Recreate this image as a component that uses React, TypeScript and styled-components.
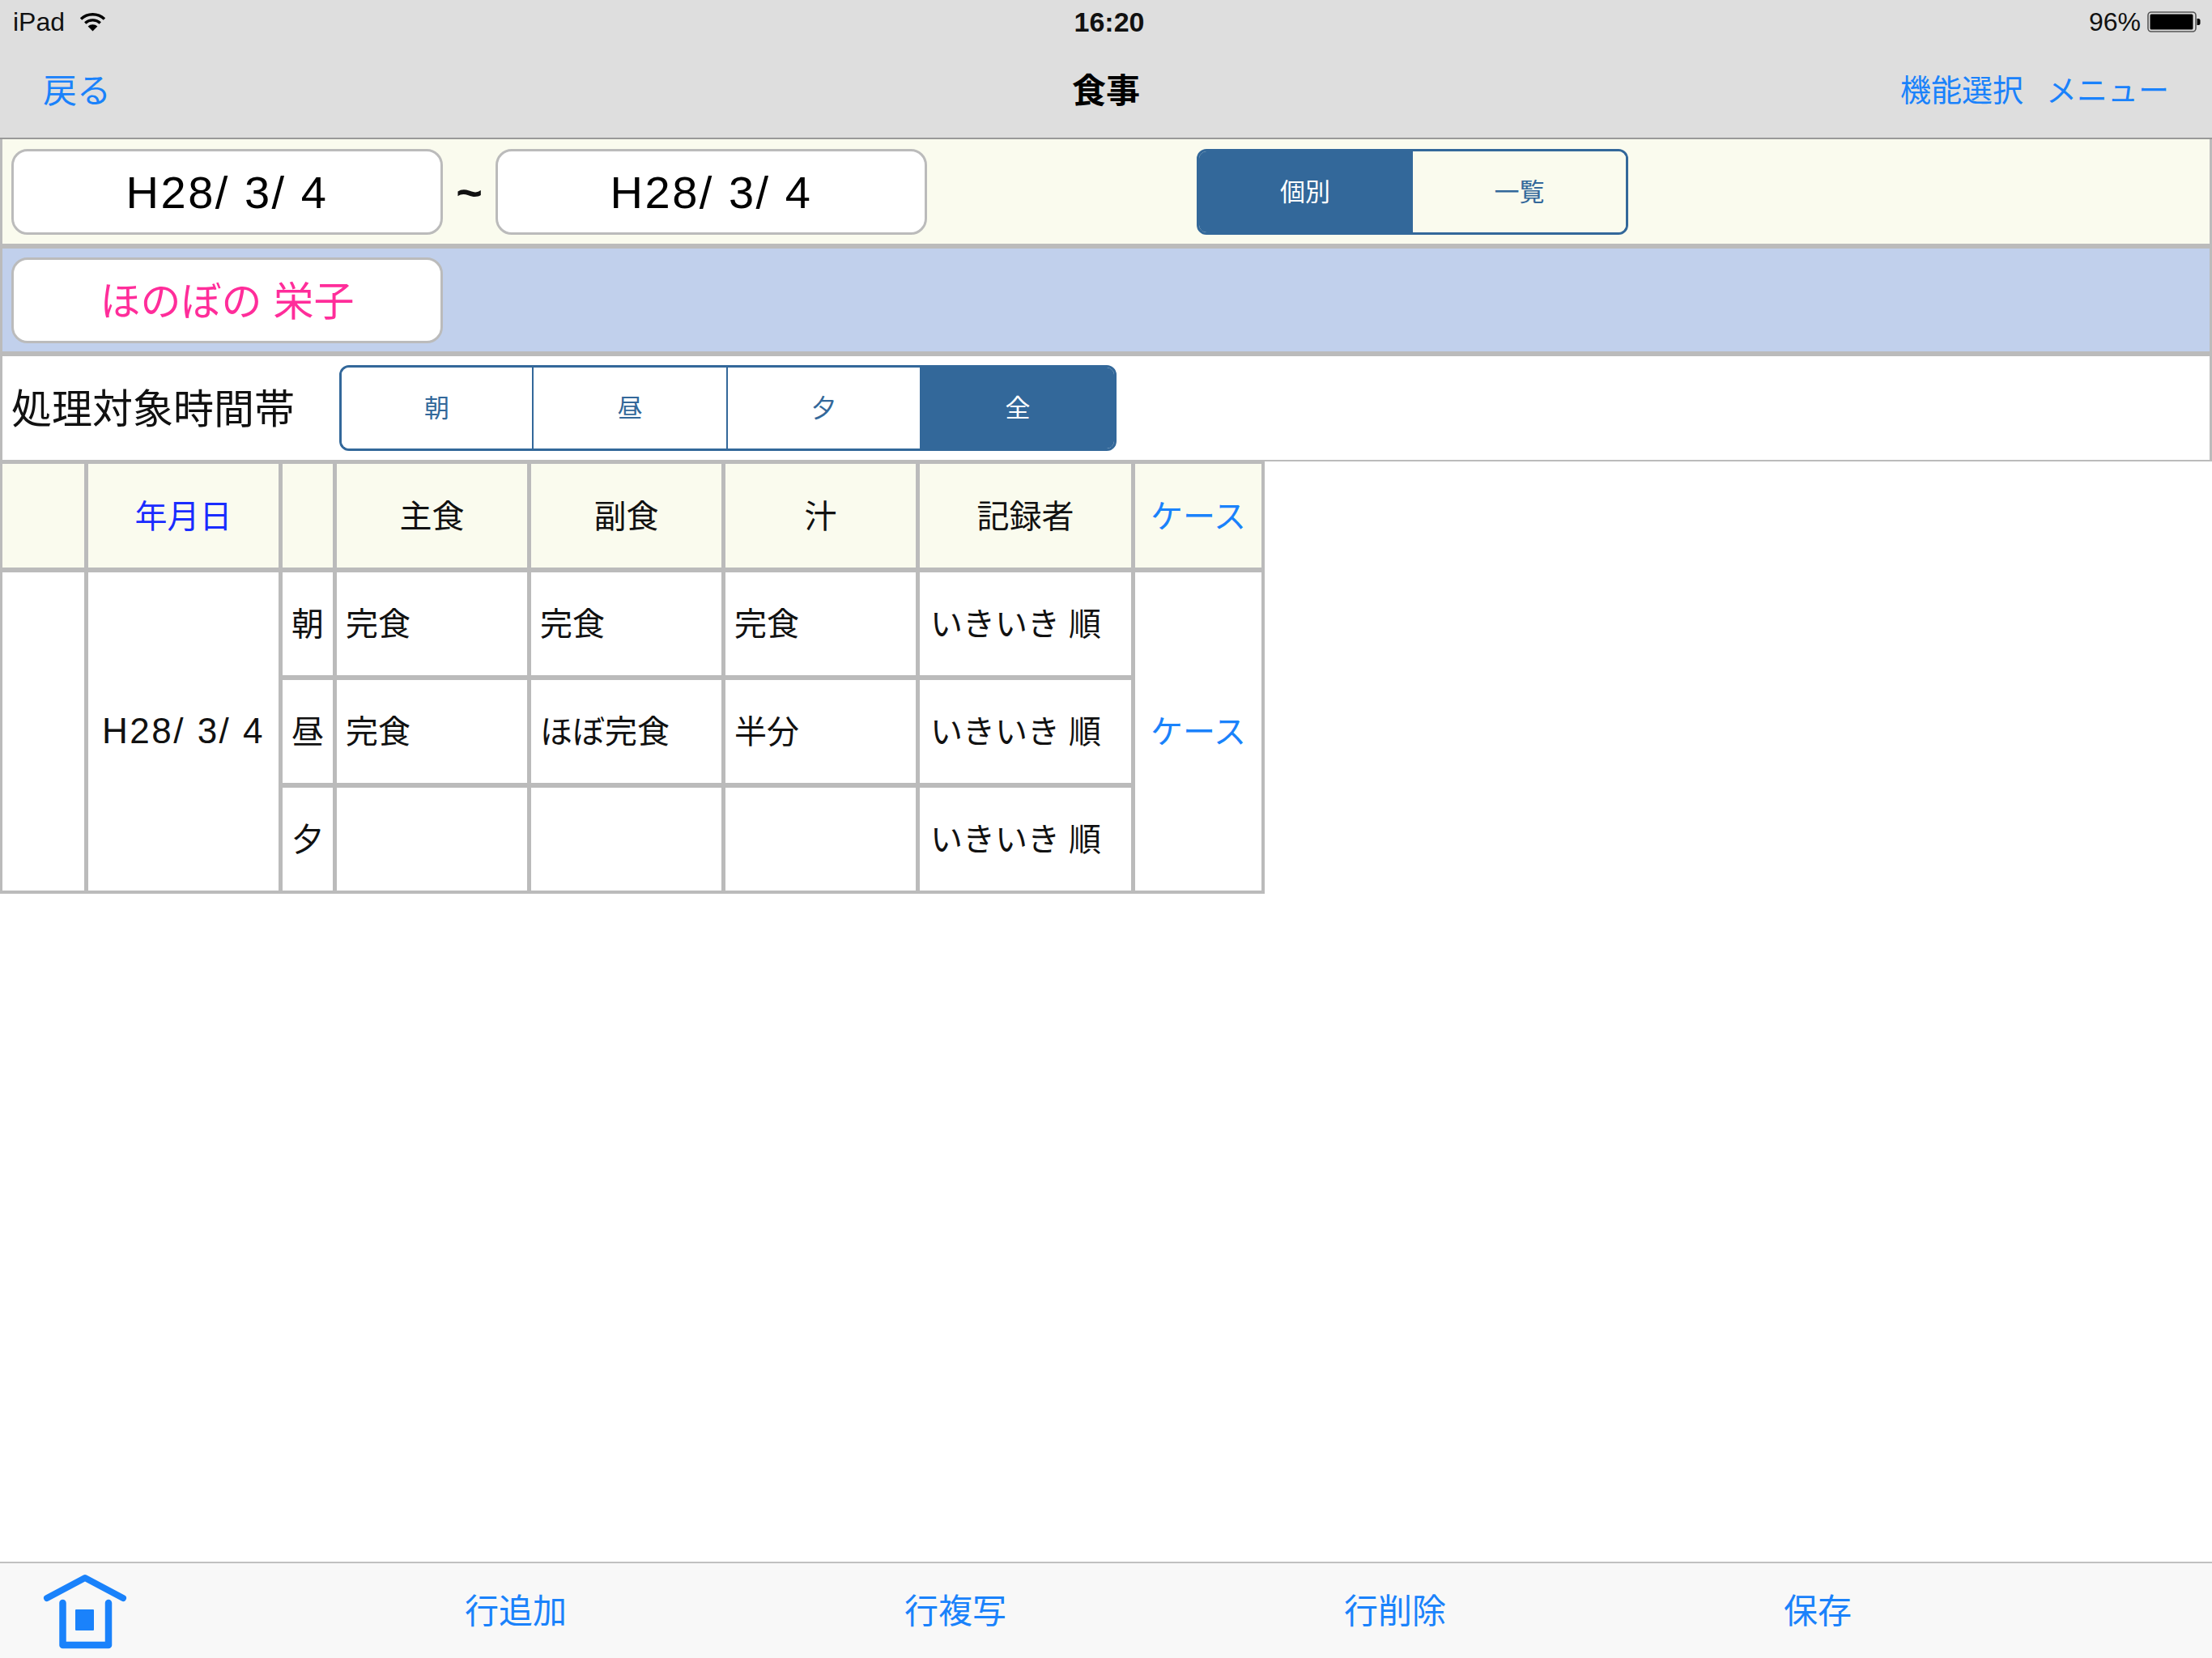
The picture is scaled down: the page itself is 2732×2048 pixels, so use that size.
import React from 'react'
import styled, { createGlobalStyle } from 'styled-components'

const BLUE = '#1a82fb'
const LINE = '#bbbbbb'
const CREAM = '#fafbee'
const SEG = '#33689a'

const Global = createGlobalStyle`
  html, body { margin: 0; padding: 0; background: #fff; }
  body { font-family: "Liberation Sans", "Noto Sans CJK JP", sans-serif; font-weight: 400; color: #111; }
`
const Page = styled.div`
  width: 2732px;
  height: 2048px;
  display: flex;
  flex-direction: column;
  overflow: hidden;
`
const TopBar = styled.header`
  height: 170px;
  background: #dedede;
  border-bottom: 2px solid #999;
  display: flex;
  flex-direction: column;
`
const StatusBar = styled.div`
  height: 54px;
  box-sizing: border-box;
  display: grid;
  grid-template-columns: 1fr auto 1fr;
  align-items: center;
  padding: 2px 14px 0 16px;
  font-size: 32px;
  color: #111;
`
const StatusLeft = styled.div`
  display: flex;
  align-items: center;
  gap: 18px;
`
const StatusRight = styled.div`
  display: flex;
  align-items: center;
  justify-content: flex-end;
  gap: 8px;
`
const Clock = styled.div`
  font-weight: 700;
  font-size: 34px;
  margin-left: 6px;
`
const NavBar = styled.nav`
  height: 116px;
  display: grid;
  grid-template-columns: 1fr auto 1fr;
  align-items: center;
  padding: 0 53px 6px 53px;
`
const NavTitle = styled.div`
  font-weight: 700;
  font-size: 42px;
  color: #000;
`
const NavLink = styled.span`
  color: ${BLUE};
  font-size: 42px;
`
const NavRight = styled.div`
  display: flex;
  justify-content: flex-end;
  gap: 28px;
  font-size: 38px;
  color: ${BLUE};
`
const Band = styled.section<{ $bg: string; $bottom: number; $h: number; $top?: number }>`
  height: ${(p) => p.$h}px;
  box-sizing: content-box;
  background: ${(p) => p.$bg};
  border-left: 3px solid ${LINE};
  border-right: 3px solid ${LINE};
  border-bottom: ${(p) => p.$bottom}px solid ${LINE};
  display: flex;
  align-items: center;
  padding-left: 11px;
  padding-top: ${(p) => p.$top ?? 0}px;
`
const PillButton = styled.div`
  width: 533px;
  height: 106px;
  box-sizing: border-box;
  background: #fff;
  border: 3px solid ${LINE};
  border-radius: 20px;
  display: flex;
  align-items: center;
  justify-content: center;
  font-size: 56px;
  letter-spacing: 2.5px;
  color: #000;
`
const NameButton = styled(PillButton)`
  font-size: 50px;
  letter-spacing: 0;
  color: #ff2d9a;
  padding-bottom: 7px;
`
const Tilde = styled.div`
  width: 65px;
  text-align: center;
  font-size: 56px;
  font-weight: 700;
  color: #111;
`
const RangeLabel = styled.div`
  width: 405px;
  font-size: 50px;
  color: #111;
  padding-bottom: 7px;
`
const Segments = styled.div<{ $offset?: number }>`
  display: flex;
  height: 106px;
  box-sizing: border-box;
  margin-left: ${(p) => p.$offset ?? 0}px;
  border: 3px solid ${SEG};
  border-radius: 12px;
  overflow: hidden;
`
const Segment = styled.div<{ $on?: boolean; $w: number; $cream?: boolean }>`
  width: ${(p) => p.$w}px;
  box-sizing: border-box;
  display: flex;
  align-items: center;
  justify-content: center;
  padding-bottom: 5px;
  font-size: 31px;
  color: ${(p) => (p.$on ? '#fff' : SEG)};
  background: ${(p) => (p.$on ? SEG : p.$cream ? CREAM : '#fff')};
  & + & {
    border-left: 2px solid ${SEG};
  }
`
const Table = styled.div`
  width: fit-content;
  margin-top: -2px;
  display: grid;
  grid-template-columns: 101px 235px 62px 235px 235px 235px 261px 156px;
  grid-template-rows: 128px 127px 127px 127px;
  column-gap: 5px;
  row-gap: 6px;
  padding: 5px 4px 4px 3px;
  background: ${LINE};
  font-size: 40px;
`
const Cell = styled.div<{ $head?: boolean; $align?: 'left' | 'center'; $pad?: number; $span?: boolean }>`
  background: ${(p) => (p.$head ? CREAM : '#fff')};
  display: flex;
  align-items: center;
  justify-content: ${(p) => (p.$align === 'left' ? 'flex-start' : 'center')};
  padding-left: ${(p) => p.$pad ?? 0}px;
  padding-bottom: 5px;
  grid-row: ${(p) => (p.$span ? 'span 3' : 'auto')};
  color: #111;
`
const DateText = styled.span`
  font-size: 44px;
  letter-spacing: 2.5px;
  margin-top: 4px;
  color: #111;
`
const SortLink = styled.span`
  color: #1a2cff;
`
const CaseLink = styled.span`
  color: ${BLUE};
`
const Spacer = styled.div`
  flex: 1;
`
const BottomBar = styled.footer`
  height: 119px;
  box-sizing: border-box;
  background: #f8f8f8;
  border-top: 2px solid #c0c0c0;
  display: flex;
  align-items: center;
  padding-left: 52px;
  gap: 417px;
  font-size: 42px;
  color: ${BLUE};
`
const BarButton = styled.span`
  margin-bottom: 7px;
`
const HomeSlot = styled.div`
  width: 106px;
  height: 96px;
  margin-right: -1px;
  & > svg {
    display: block;
  }
`

const WifiIcon = () => (
  <svg width="33" height="24" viewBox="0 0 33 24">
    <path d="M2 8.5a21 21 0 0 1 29 0" fill="none" stroke="#000" strokeWidth="3.4" />
    <path d="M7.2 13.4a14 14 0 0 1 18.6 0" fill="none" stroke="#000" strokeWidth="3.4" />
    <path d="M16.5 23.5 10.6 17.5a8.6 8.6 0 0 1 11.8 0z" fill="#000" />
  </svg>
)
const BatteryIcon = () => (
  <svg width="66" height="26" viewBox="0 0 66 26">
    <rect x="1" y="1" width="59" height="24" rx="4" fill="none" stroke="#555" strokeWidth="1.6" />
    <rect x="3.5" y="3.5" width="53" height="19" rx="1.5" fill="#000" />
    <path d="M61.5 9h1.5a2.5 2.5 0 0 1 2.5 2.5v3a2.5 2.5 0 0 1-2.5 2.5h-1.5z" fill="#000" />
  </svg>
)
const HomeIcon = () => (
  <svg width="106" height="96" viewBox="0 0 106 96" fill="none" stroke={BLUE} strokeLinecap="round" strokeLinejoin="round">
    <path d="M6 32 53 7l47 25" strokeWidth="8" />
    <path d="M25.5 38v52H82V38" strokeWidth="8.5" />
    <rect x="41" y="46" width="23" height="26" rx="1" fill={BLUE} stroke="none" />
  </svg>
)

const meals = [
  { slot: '朝', main: '完食', side: '完食', soup: '完食' },
  { slot: '昼', main: '完食', side: 'ほぼ完食', soup: '半分' },
  { slot: '夕', main: '', side: '', soup: '' },
]

export default function App() {
  return (
    <Page>
      <Global />
      <TopBar>
        <StatusBar>
          <StatusLeft>
            <span>iPad</span>
            <WifiIcon />
          </StatusLeft>
          <Clock>16:20</Clock>
          <StatusRight>
            <span>96%</span>
            <BatteryIcon />
          </StatusRight>
        </StatusBar>
        <NavBar>
          <NavLink>戻る</NavLink>
          <NavTitle>食事</NavTitle>
          <NavRight>
            <span>機能選択</span>
            <span>メニュー</span>
          </NavRight>
        </NavBar>
      </TopBar>
      <Band $bg={CREAM} $bottom={6} $h={128} $top={1}>
        <PillButton>H28/ 3/ 4</PillButton>
        <Tilde>~</Tilde>
        <PillButton>H28/ 3/ 4</PillButton>
        <Segments $offset={333}>
          <Segment $on $w={262}>個別</Segment>
          <Segment $w={265} $cream>一覧</Segment>
        </Segments>
      </Band>
      <Band $bg="#c1d0ec" $bottom={6} $h={126} $top={1}>
        <NameButton>ほのぼの 栄子</NameButton>
      </Band>
      <Band $bg="#fff" $bottom={2} $h={128}>
        <RangeLabel>処理対象時間帯</RangeLabel>
        <Segments>
          <Segment $w={235}>朝</Segment>
          <Segment $w={240}>昼</Segment>
          <Segment $w={239}>夕</Segment>
          <Segment $on $w={240}>全</Segment>
        </Segments>
      </Band>
      <Table>
        <Cell $head />
        <Cell $head><SortLink>年月日</SortLink></Cell>
        <Cell $head />
        <Cell $head>主食</Cell>
        <Cell $head>副食</Cell>
        <Cell $head>汁</Cell>
        <Cell $head>記録者</Cell>
        <Cell $head><CaseLink>ケース</CaseLink></Cell>
        {meals.map((m, i) => (
          <React.Fragment key={m.slot}>
            {i === 0 && <Cell $span />}
            {i === 0 && <Cell $span><DateText>H28/ 3/ 4</DateText></Cell>}
            <Cell>{m.slot}</Cell>
            <Cell $align="left" $pad={11}>{m.main}</Cell>
            <Cell $align="left" $pad={11}>{m.side}</Cell>
            <Cell $align="left" $pad={11}>{m.soup}</Cell>
            <Cell $align="left" $pad={13}>いきいき 順</Cell>
            {i === 0 && <Cell $span><CaseLink>ケース</CaseLink></Cell>}
          </React.Fragment>
        ))}
      </Table>
      <Spacer />
      <BottomBar>
        <HomeSlot><HomeIcon /></HomeSlot>
        <BarButton>行追加</BarButton>
        <BarButton>行複写</BarButton>
        <BarButton>行削除</BarButton>
        <BarButton>保存</BarButton>
      </BottomBar>
    </Page>
  )
}
